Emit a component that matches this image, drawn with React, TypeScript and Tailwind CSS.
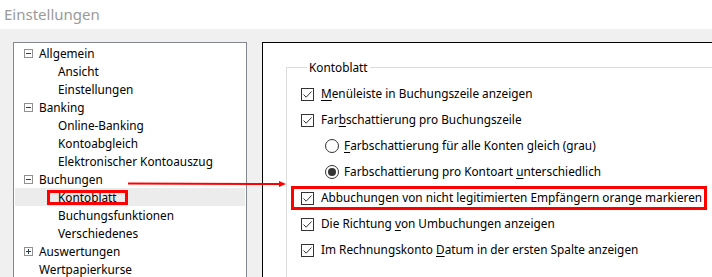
import React from "react";

const font = { fontFamily: '"Noto Sans", "Segoe UI", sans-serif' };

function Expander({ open }: { open: boolean }) {
  return (
    <span className="w-[9px] h-[9px] border border-[#919191] bg-white flex items-center justify-center relative mr-[6px] ml-[9px] shrink-0">
      <span className="absolute w-[5px] h-[1px] bg-[#2c3e5c]" />
      {!open && <span className="absolute w-[1px] h-[5px] bg-[#2c3e5c]" />}
    </span>
  );
}

function TreeRow({
  label,
  level,
  exp,
  selected,
  boxed,
}: {
  label: string;
  level: 0 | 1;
  exp?: "open" | "closed";
  selected?: boolean;
  boxed?: boolean;
}) {
  return (
    <div className={`h-[18px] flex items-center ml-[1px] mr-[1px] ${selected ? "bg-[#ececec]" : ""}`}>
      {level === 0 ? (
        exp ? (
          <Expander open={exp === "open"} />
        ) : (
          <span className="w-[24px] shrink-0" />
        )
      ) : (
        <span className="w-[43px] shrink-0" />
      )}
      <span className={`leading-[14px] whitespace-nowrap ${boxed ? "relative" : ""}`}>
        {label}
        {boxed && (
          <span className="absolute left-[-11px] w-[81px] top-[0px] bottom-[-1px] border-[3px] border-[#ff0000]" />
        )}
      </span>
    </div>
  );
}

function Check() {
  return (
    <span className="w-[13px] h-[13px] border border-[#333333] bg-white flex items-center justify-center shrink-0">
      <svg width="11" height="11" viewBox="0 0 11 11">
        <path d="M1.5 5.5 L4.2 8.2 L9.5 2.5" fill="none" stroke="#333" strokeWidth="1" />
      </svg>
    </span>
  );
}

function Radio({ on }: { on?: boolean }) {
  return (
    <span className="w-[14px] h-[14px] rounded-full border border-[#333333] bg-white flex items-center justify-center shrink-0">
      {on && <span className="w-[8px] h-[8px] rounded-full bg-[#333333]" />}
    </span>
  );
}

function U({ children }: { children: React.ReactNode }) {
  return <span className="underline underline-offset-2">{children}</span>;
}

export default function App() {
  return (
    <div className="w-[712px] h-[277px] bg-[#f0f0f0] overflow-hidden text-[11.8px] text-black" style={font}>
      <div className="h-[29px] bg-white flex items-center pl-[4px] text-[15px] text-[#9a9a9a]">Einstellungen</div>
      <div className="flex pt-[13px] pl-[13px] relative">
        <div className="w-[234px] shrink-0 h-[300px] border border-[#828790] bg-white pt-[1px]">
          <TreeRow label="Allgemein" level={0} exp="open" />
          <TreeRow label="Ansicht" level={1} />
          <TreeRow label="Einstellungen" level={1} />
          <TreeRow label="Banking" level={0} exp="open" />
          <TreeRow label="Online-Banking" level={1} />
          <TreeRow label="Kontoabgleich" level={1} />
          <TreeRow label="Elektronischer Kontoauszug" level={1} />
          <TreeRow label="Buchungen" level={0} exp="open" />
          <TreeRow label="Kontoblatt" level={1} selected boxed />
          <TreeRow label="Buchungsfunktionen" level={1} />
          <TreeRow label="Verschiedenes" level={1} />
          <TreeRow label="Auswertungen" level={0} exp="closed" />
          <TreeRow label="Wertpapierkurse" level={0} />
        </div>
        <div className="ml-[15px] w-[460px] shrink-0 h-[300px] border-l border-t border-black bg-white pl-[23px] pt-[17px]">
          <fieldset className="border border-[#dcdcdc] h-[300px] w-[500px] pl-[14px] pt-[7px]">
            <legend className="ml-[6px] px-[2px] leading-[14px]">Kontoblatt</legend>
            <div className="flex flex-col">
              <div className="h-[26px] flex items-center gap-[7px]">
                <Check />
                <span><U>M</U>enüleiste in Buchungszeile anzeigen</span>
              </div>
              <div className="h-[26px] flex items-center gap-[7px]">
                <Check />
                <span>Far<U>b</U>schattierung pro Buchungszeile</span>
              </div>
              <div className="h-[26px] flex items-center gap-[5px] pl-[24px]">
                <Radio />
                <span><U>F</U>arbschattierung für alle Konten gleich (grau)</span>
              </div>
              <div className="h-[26px] flex items-center gap-[5px] pl-[24px]">
                <Radio on />
                <span>Farbschattierung pro Kontoart <U>u</U>nterschiedlich</span>
              </div>
              <div className="h-[26px] flex items-center gap-[7px] relative">
                <Check />
                <span className="whitespace-nowrap">Abbuchungen von nicht legitimierten Empfängern orange markieren</span>
                <span className="absolute left-[-10px] w-[416px] top-[1px] bottom-[1px] border-[3px] border-[#ff0000]" />
              </div>
              <div className="h-[26px] flex items-center gap-[7px]">
                <Check />
                <span>Die Richtung <U>v</U>on Umbuchungen anzeigen</span>
              </div>
              <div className="h-[26px] flex items-center gap-[7px]">
                <Check />
                <span>Im Rechnungskonto <U>D</U>atum in der ersten Spalte anzeigen</span>
              </div>
            </div>
          </fieldset>
        </div>
        <svg className="absolute left-[128px] top-[151px]" width="160" height="8" viewBox="0 0 160 8">
          <line x1="0" y1="3.5" x2="152" y2="4" stroke="#ff0000" strokeWidth="2" />
          <path d="M151 1 L158 4 L151 7 Z" fill="#ff0000" />
        </svg>
      </div>
    </div>
  );
}
